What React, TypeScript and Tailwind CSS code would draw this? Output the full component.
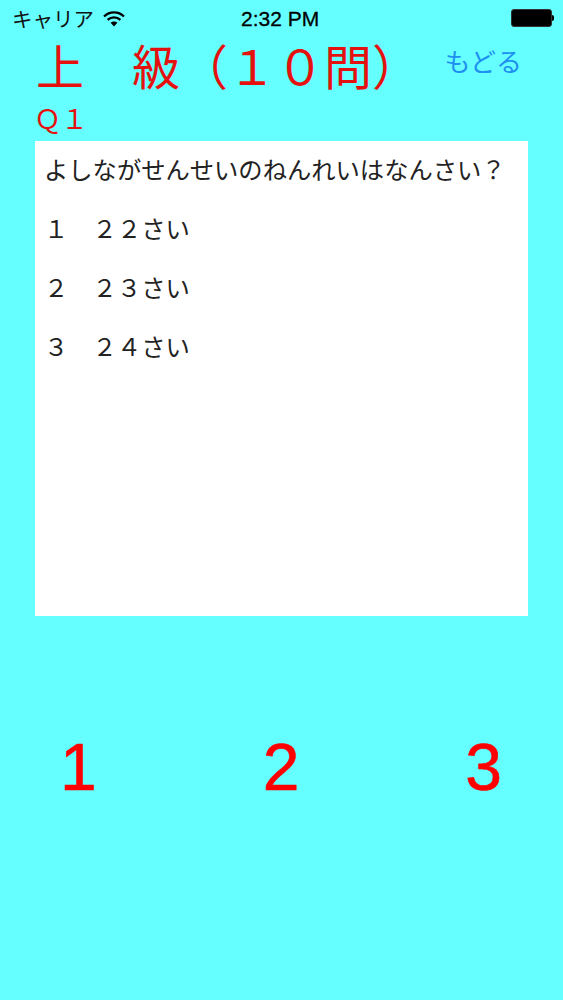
import React from "react";

const jp = { fontFamily: '"Noto Sans CJK JP", sans-serif' };

function Wifi() {
  return (
    <svg width="24" height="18" viewBox="0 0 24 18" fill="none" className="block">
      <path d="M2 7.5 C7.5 2 16.5 2 22 7.5" stroke="#000" strokeWidth="2.2" />
      <path d="M5.6 10.9 C9.2 7.5 14.8 7.5 18.4 10.9" stroke="#000" strokeWidth="2.2" />
      <path d="M8.6 13.7 C10.6 12.1 13.4 12.1 15.4 13.7 L12 17.5 Z" fill="#000" />
    </svg>
  );
}

function Battery() {
  return (
    <div className="flex items-center">
      <div className="h-[18px] w-[41px] rounded-[3px] border border-[#333] bg-black" />
      <div className="h-[6px] w-[2px] rounded-r-sm bg-black" />
    </div>
  );
}

export default function App() {
  return (
    <div className="flex h-[1000px] w-[563px] flex-col overflow-hidden bg-[#66ffff]">
      <div className="relative flex h-[36px] items-center justify-between pl-[12px] pr-[9px]">
        <div className="flex items-center gap-[8px]">
          <span className="text-[20.5px] leading-none text-[#111]" style={jp}>キャリア</span>
          <Wifi />
        </div>
        <span className="absolute left-[241px] top-[8px] text-[21px] font-normal leading-none text-black [-webkit-text-stroke:0.3px_black] [font-family:'Liberation_Sans',sans-serif]">2:32 PM</span>
        <Battery />
      </div>
      <div className="flex h-[58px] items-center justify-between pl-[36px] pr-[41px]">
        <span className="-mt-[3px] text-[48px] font-normal leading-[58px] text-[#e5110e]" style={jp}>上　級（１０問）</span>
        <span className="-mt-[8px] text-[26px] font-normal leading-[40px] text-[#1e90f0]" style={jp}>もどる</span>
      </div>
      <div className="mt-[10px] pl-[34px] text-[27px] font-normal leading-[28px] text-[#e5110e]" style={jp}>Ｑ１</div>
      <div className="mx-[35px] mt-[9px] flex h-[475px] flex-col bg-white pl-[9px] pt-[11px] text-[24.3px] font-normal leading-[34px] text-[#222]" style={jp}>
        <div>よしながせんせいのねんれいはなんさい？</div>
        <div className="mt-[25px]">１　２２さい</div>
        <div className="mt-[25px]">２　２３さい</div>
        <div className="mt-[25px]">３　２４さい</div>
      </div>
      <div className="mt-[114px] flex justify-between pl-[60px] pr-[61px] text-[66px] leading-[74px] text-[#ff0000] [-webkit-text-stroke:0.6px_#ff0000] [font-family:'Liberation_Sans',sans-serif]">
        <span>1</span>
        <span>2</span>
        <span>3</span>
      </div>
    </div>
  );
}
